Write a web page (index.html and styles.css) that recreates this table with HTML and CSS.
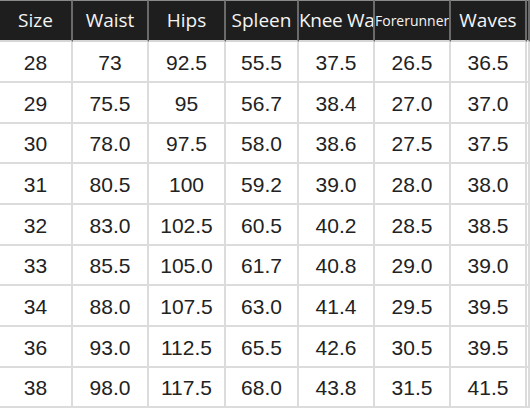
FILE: index.html
```html
<!DOCTYPE html>
<html lang="en">
<head>
<meta charset="utf-8">
<title>Size chart</title>
<link rel="stylesheet" href="styles.css">
</head>
<body>
<div class="chart">
  <div class="hd">Size</div>
  <div class="hd">Waist</div>
  <div class="hd">Hips</div>
  <div class="hd">Spleen</div>
  <div class="hd clip">Knee Waist</div>
  <div class="hd small">Forerunner</div>
  <div class="hd">Waves</div>
  <div class="hd"></div>

  <div class="c">28</div><div class="c">73</div><div class="c">92.5</div><div class="c">55.5</div><div class="c">37.5</div><div class="c">26.5</div><div class="c">36.5</div><div class="c"></div>
  <div class="c">29</div><div class="c">75.5</div><div class="c">95</div><div class="c">56.7</div><div class="c">38.4</div><div class="c">27.0</div><div class="c">37.0</div><div class="c"></div>
  <div class="c">30</div><div class="c">78.0</div><div class="c">97.5</div><div class="c">58.0</div><div class="c">38.6</div><div class="c">27.5</div><div class="c">37.5</div><div class="c"></div>
  <div class="c">31</div><div class="c">80.5</div><div class="c">100</div><div class="c">59.2</div><div class="c">39.0</div><div class="c">28.0</div><div class="c">38.0</div><div class="c"></div>
  <div class="c">32</div><div class="c">83.0</div><div class="c">102.5</div><div class="c">60.5</div><div class="c">40.2</div><div class="c">28.5</div><div class="c">38.5</div><div class="c"></div>
  <div class="c">33</div><div class="c">85.5</div><div class="c">105.0</div><div class="c">61.7</div><div class="c">40.8</div><div class="c">29.0</div><div class="c">39.0</div><div class="c"></div>
  <div class="c">34</div><div class="c">88.0</div><div class="c">107.5</div><div class="c">63.0</div><div class="c">41.4</div><div class="c">29.5</div><div class="c">39.5</div><div class="c"></div>
  <div class="c">36</div><div class="c">93.0</div><div class="c">112.5</div><div class="c">65.5</div><div class="c">42.6</div><div class="c">30.5</div><div class="c">39.5</div><div class="c"></div>
  <div class="c">38</div><div class="c">98.0</div><div class="c">117.5</div><div class="c">68.0</div><div class="c">43.8</div><div class="c">31.5</div><div class="c">41.5</div><div class="c"></div>
</div>
</body>
</html>
```

FILE: styles.css
```css
html, body {
  margin: 0;
  padding: 0;
  background: #ffffff;
  overflow: hidden;
}

.chart {
  display: grid;
  grid-template-columns: 73px 76px 77px 73px 76px 76px 76px 1fr;
  grid-template-rows: 42px 41px 41px 40px 41px 41px 40px 41px 41px 40px;
  width: 530px;
}

.hd,
.c {
  box-sizing: border-box;
  overflow: hidden;
  white-space: nowrap;
  text-align: center;
}

.hd {
  background: #1e1e1e;
  color: #f4f4f4;
  font-family: "Open Sans", "DejaVu Sans", sans-serif;
  font-size: 19px;
  border-top: 1px solid #8a8a8a;
  border-right: 2px solid #6a6a6a;
  border-bottom: 2px solid #d6d6d6;
  line-height: 38px;
}

.hd.clip {
  letter-spacing: -0.3px;
}

.hd.small {
  font-size: 14px;
  line-height: 40px;
}

.c {
  color: #222222;
  font-family: "Liberation Sans", Arial, sans-serif;
  font-size: 21px;
  border-right: 2px solid #dcdcdc;
  border-bottom: 2px solid #dcdcdc;
  display: flex;
  align-items: center;
  justify-content: center;
  padding-top: 2px;
}
```
